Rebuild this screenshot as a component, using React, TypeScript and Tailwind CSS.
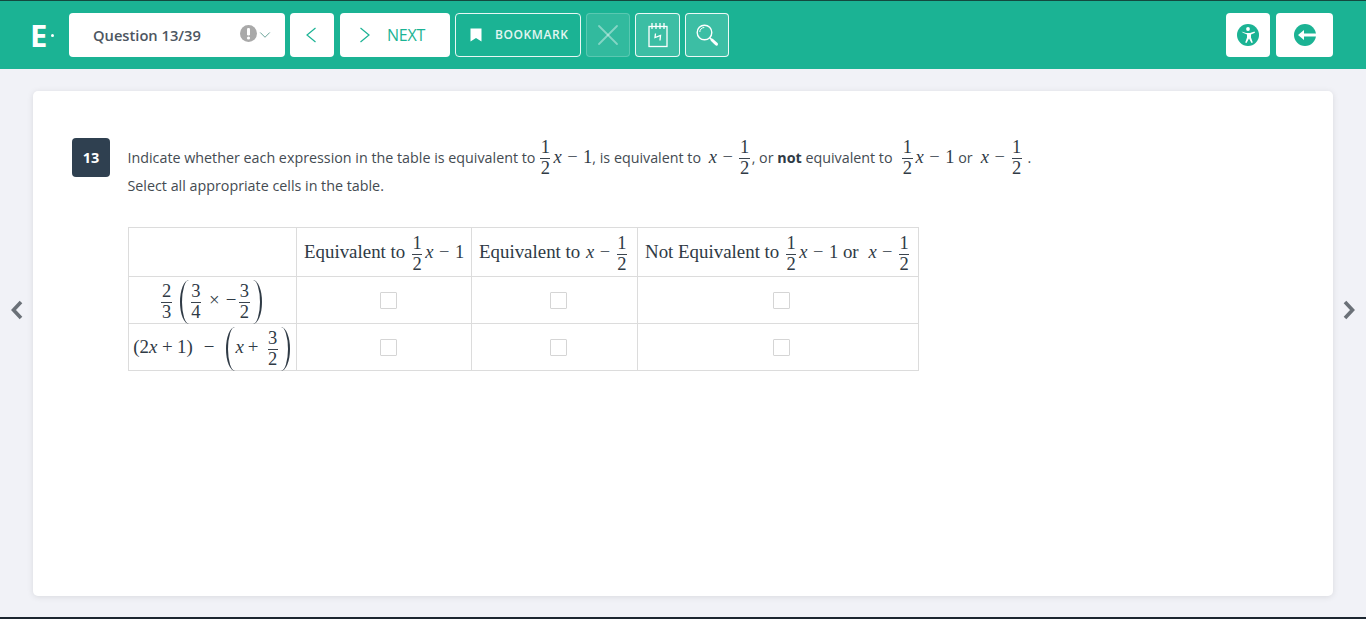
import { ChevronDown, X } from "lucide-react";
import type { ReactNode } from "react";

const SERIF = "font-['Liberation_Serif',serif]";

function Frac({ n, d }: { n: string; d: string }) {
  return (
    <span className={`${SERIF} inline-flex flex-col items-center align-middle -my-[10px] text-[18.5px] leading-[19px] text-[#2f3a45]`}>
      <span className="border-b border-[#3a444e] px-[0.500px] pb-[1px]">{n}</span>
      <span>{d}</span>
    </span>
  );
}

function X_() {
  return <i className={`${SERIF} italic font-normal`}>x</i>;
}

function Minus({ className = "mx-[5.500px]" }: { className?: string }) {
  return <span className={className}>−</span>;
}

// 1/2 x − 1
function HalfXMinusOne() {
  return (
    <span className={`${SERIF} text-[18.500px] whitespace-nowrap text-[#2f3a45]`}>
      <Frac n="1" d="2" />
      <span className="ml-[3px]"><X_ /></span>
      <Minus />1
    </span>
  );
}

// x − 1/2
function XMinusHalf() {
  return (
    <span className={`${SERIF} text-[18.500px] whitespace-nowrap text-[#2f3a45]`}>
      <X_ />
      <Minus />
      <span className="ml-[1px]"><Frac n="1" d="2" /></span>
    </span>
  );
}

// tall bracket as a css curve, thick in the middle and tapering out at the ends
function Paren({ right = false }: { right?: boolean }) {
  return (
    <span
      className={
        right
          ? "inline-block align-middle -my-[10px] ml-[3px] w-[9px] h-[44px] border-r-[2px] border-[#2f3a45] rounded-r-[100%_50%]"
          : "inline-block align-middle -my-[10px] w-[9px] h-[44px] border-l-[2px] border-[#2f3a45] rounded-l-[100%_50%]"
      }
    />
  );
}

function Box() {
  return <span className="inline-block w-[17px] h-[17px] border border-[#d5d5d5] rounded-[1px] bg-white align-middle" />;
}

function Cell({ children, className = "" }: { children?: ReactNode; className?: string }) {
  return <td className={`border border-[#dcdcdc] p-0 align-middle whitespace-nowrap ${className}`}>{children}</td>;
}

function TopBtn({ children, className = "" }: { children: ReactNode; className?: string }) {
  return <button className={`h-[44px] rounded-[4px] flex items-center justify-center shrink-0 ${className}`}>{children}</button>;
}

function Thin({ d }: { d: string }) {
  return (
    <svg width="10" height="16" viewBox="0 0 10 16" fill="none" stroke="#1bb394" strokeWidth="1.200">
      <path d={d} />
    </svg>
  );
}

export default function App() {
  return (
    <div className="h-screen flex flex-col bg-[#f1f2f7] font-['Open_Sans',sans-serif] overflow-hidden border-b-2 border-[#1c2630]">
      {/* Top bar */}
      <header className="h-[69px] shrink-0 bg-[#1bb394] border-t border-[#14493f] flex items-center pl-[33px] pr-[33px]">
        <div className="w-[36px] flex items-center text-white">
          <span className="text-[31px] font-bold leading-none -ml-[3px]">E</span>
          <span className="w-[3px] h-[3px] rounded-full bg-white ml-[4px]" />
        </div>
        <div className="w-[216px] h-[44px] bg-white rounded-[4px] flex items-center pl-[24px] pr-[13px] shrink-0">
          <span className="text-[14.700px] font-semibold text-[#4d5661]">Question 13/39</span>
          <svg width="17" height="17" viewBox="0 0 17 17" className="ml-auto -mt-[3px]">
            <circle cx="8.500" cy="8.500" r="8.500" fill="#a9a9a9" />
            <rect x="7" y="3" width="3" height="7.500" rx="1.200" fill="#fff" />
            <circle cx="8.500" cy="13" r="1.600" fill="#fff" />
          </svg>
          <ChevronDown size={18} strokeWidth={1.100} className="text-[#4a8f82] -ml-[1px] -mr-[2px]" />
        </div>
        <TopBtn className="w-[44px] ml-[5px] bg-white justify-start pl-[16px]">
          <Thin d="M9.500 1L1 8l8.500 7" />
        </TopBtn>
        <TopBtn className="w-[110px] ml-[6px] bg-white text-[#1bb394] justify-start pl-[20px]">
          <Thin d="M.5 1L9 8l-8.500 7" />
          <span className="ml-[17px] text-[16px] tracking-[-0.200px]">NEXT</span>
        </TopBtn>
        <TopBtn className="w-[126px] ml-[5px] border border-white/90 text-white justify-start pl-[14px]">
          <svg width="12" height="14" viewBox="0 0 12 14">
            <path d="M0.500 0.500h11v13l-5.500-3.400-5.500 3.400z" fill="#fff" />
          </svg>
          <span className="ml-[13px] text-[12px] font-semibold tracking-[0.600px] text-[#e2f6f1]">BOOKMARK</span>
        </TopBtn>
        <TopBtn className="w-[44px] ml-[5px] border border-white/20 bg-white/10">
          <X size={36} strokeWidth={1.200} className="text-white/40" />
        </TopBtn>
        <TopBtn className="w-[45px] ml-[5px] border border-white/90 bg-white/15">
          <svg width="22" height="26" viewBox="0 0 22 26" fill="none" stroke="#fff" strokeWidth="1.300">
            <rect x="2" y="4.500" width="18" height="20" />
            <path d="M5 1v6M9 1v6M13 1v6M17 1v6" />
            <path d="M8.500 11.500l-.5 4 5.500-2-.5 5" />
          </svg>
        </TopBtn>
        <TopBtn className="w-[44px] ml-[5px] border border-white/90 bg-white/15">
          <svg width="24" height="24" viewBox="0 0 24 24" fill="none" stroke="#fff">
            <circle cx="9.500" cy="9.500" r="7.300" strokeWidth="1.400" />
            <path d="M4.800 9a4.500 4.500 0 0 1 4.500-4.500" strokeWidth="1" />
            <path d="M14.800 14.800l2 2" strokeWidth="1.400" />
            <path d="M17 17l4.500 4.200" strokeWidth="3" strokeLinecap="round" />
          </svg>
        </TopBtn>
        <TopBtn className="w-[44px] ml-auto bg-white">
          <svg width="22" height="22" viewBox="0 0 22 22">
            <circle cx="11" cy="11" r="11" fill="#1bb394" />
            <circle cx="11" cy="5" r="1.900" fill="#fff" />
            <path d="M4.500 7.500l4.500 1.500h4l4.500-1.500.5 1.200-4 1.800v3l1.800 5-1.300.5-2.500-4.500-2.500 4.500-1.300-.5 1.800-5v-3l-4-1.800z" fill="#fff" />
          </svg>
        </TopBtn>
        <TopBtn className="w-[57px] ml-[6px] bg-white">
          <svg width="22" height="22" viewBox="0 0 22 22">
            <circle cx="11" cy="11" r="11" fill="#1bb394" />
            <path d="M22 9.500h-12v-3.500l-6 5 6 5v-3.500h12z" fill="#fff" />
          </svg>
        </TopBtn>
      </header>

      {/* Body */}
      <div className="flex-1 flex min-h-0 pt-[22px] pb-[21px]">
        <div className="w-[33px] flex justify-center items-start pt-[209px]">
          <svg width="14" height="20" viewBox="0 0 14 20">
            <path d="M11 2l-7.500 8 7.500 8" fill="none" stroke="#6b7178" strokeWidth="3.600" />
          </svg>
        </div>
        <main className="flex-1 bg-white rounded-[5px] shadow-[0_1px_6px_rgba(0,0,0,0.1)] pl-[39px] pt-[47px]">
          <div className="flex items-start">
            <div className="w-[38px] h-[39px] bg-[#2f4050] rounded-[4px] text-white text-[14.500px] font-bold flex items-center justify-center shrink-0">13</div>
            <div className="ml-[17.500px] mt-[4.500px] text-[14.300px] leading-[28px] text-[#444b52] whitespace-nowrap">
              <p>
                Indicate whether each expression in the table is equivalent to{" "}
                <span className="ml-[1px]"><HalfXMinusOne /></span>, is equivalent to{" "}
                <span className="ml-[4px] mr-[2px]"><XMinusHalf /></span>, or <b className="text-[#2f3a45]">not</b> equivalent to{" "}
                <span className="ml-[6px]"><HalfXMinusOne /></span> or{" "}
                <span className="ml-[4.500px]"><XMinusHalf /></span> <span className="ml-[2px]">.</span>
              </p>
              <p>Select all appropriate cells in the table.</p>
            </div>
          </div>

          <table className={`${SERIF} ml-[56px] mt-[27px] border-collapse text-[18.900px] text-[#2f3a45] table-fixed w-[790px]`}>
            <colgroup>
              <col className="w-[168px]" />
              <col className="w-[175px]" />
              <col className="w-[166px]" />
              <col className="w-[281px]" />
            </colgroup>
            <tbody>
              <tr className="h-[49px]">
                <Cell />
                <Cell className="pl-[7px] pt-[2px]">
                  Equivalent to <span className="ml-[2px]"><HalfXMinusOne /></span>
                </Cell>
                <Cell className="pl-[7px] pt-[2px]">
                  Equivalent to <span className="ml-[1px]"><XMinusHalf /></span>
                </Cell>
                <Cell className="pl-[7px] pt-[2px]">
                  Not Equivalent to <span className="ml-[2px]"><HalfXMinusOne /></span> or <span className="ml-[5px]"><XMinusHalf /></span>
                </Cell>
              </tr>
              <tr className="h-[47px]">
                <Cell className="text-center pr-[2px] pt-[2px]">
                  <Frac n="2" d="3" />
                  <span className="ml-[8px]"><Paren /></span>
                  <span className="ml-[2px]"><Frac n="3" d="4" /></span>
                  <span className="ml-[8px] mr-[6px]">×</span>
                  <span className="mr-[3px]">−</span>
                  <Frac n="3" d="2" />
                  <Paren right />
                </Cell>
                <Cell className="pl-[8px] text-center"><Box /></Cell>
                <Cell className="pl-[7px] text-center"><Box /></Cell>
                <Cell className="pl-[7px] text-center"><Box /></Cell>
              </tr>
              <tr className="h-[47px]">
                <Cell className="text-center pr-[2px] pt-[2px]">
                  (2<X_ /><span className="mx-[4.500px]">+</span>1)
                  <Minus className="ml-[11px] mr-[12px]" />
                  <Paren />
                  <X_ />
                  <span className="ml-[4px] mr-[9px]">+</span>
                  <Frac n="3" d="2" />
                  <Paren right />
                </Cell>
                <Cell className="pl-[8px] text-center"><Box /></Cell>
                <Cell className="pl-[7px] text-center"><Box /></Cell>
                <Cell className="pl-[7px] text-center"><Box /></Cell>
              </tr>
            </tbody>
          </table>
        </main>
        <div className="w-[33px] flex justify-center items-start pt-[209px]">
          <svg width="14" height="20" viewBox="0 0 14 20">
            <path d="M2 2l7.500 8-7.500 8" fill="none" stroke="#6b7178" strokeWidth="3.600" />
          </svg>
        </div>
      </div>
    </div>
  );
}
